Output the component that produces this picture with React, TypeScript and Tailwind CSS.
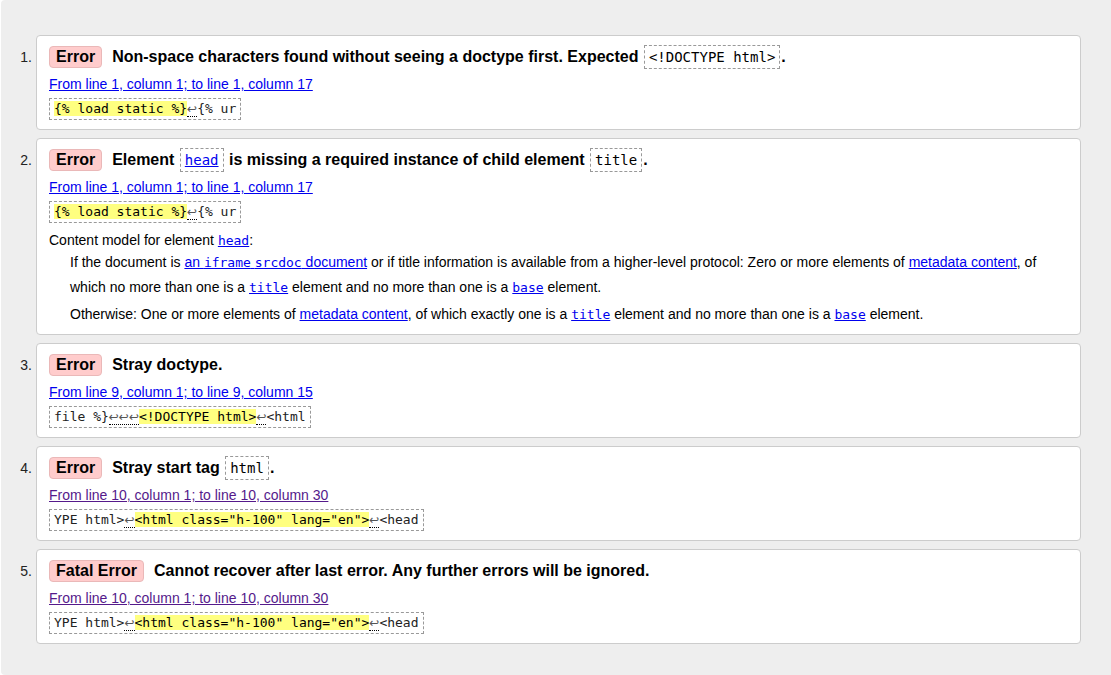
import React from 'react';

type Seg = { t: string; hl?: boolean; lf?: boolean };

const mono = "font-['DejaVu_Sans_Mono','Liberation_Mono',monospace]";

function Code({ children }: { children: React.ReactNode }) {
  return (
    <code className={`${mono} font-normal text-[14px] inline-block border border-dashed border-[#999] px-[4px] leading-[22px] mx-[1px]`}>
      {children}
    </code>
  );
}

function Link({ children, visited = false }: { children: React.ReactNode; visited?: boolean }) {
  return (
    <a href="#" className={`underline ${visited ? 'text-[#551a8b]' : 'text-[#0000ee]'}`}>
      {children}
    </a>
  );
}

function Mono({ children }: { children: React.ReactNode }) {
  return <code className={`${mono} text-[13px]`}>{children}</code>;
}

function Extract({ segs }: { segs: Seg[] }) {
  return (
    <div className={`${mono} inline-block border border-dashed border-[#999] px-[4px] h-[22px] leading-[20px] text-[13px] text-[#222] whitespace-pre`}>
      {segs.map((s, i) =>
        s.lf ? (
          <span key={i} className="font-['DejaVu_Sans',sans-serif] text-[12px] border-b border-dotted border-black text-[#555]">{s.t}</span>
        ) : s.hl ? (
          <span key={i} className="bg-[#ffff80] text-black">{s.t}</span>
        ) : (
          <span key={i}>{s.t}</span>
        )
      )}
    </div>
  );
}

const docExtract: Seg[] = [
  { t: 'YPE html>' },
  { t: '↩', lf: true },
  { t: '<html class="h-100" lang="en">', hl: true },
  { t: '↩', lf: true },
  { t: '<head' },
];

const loadExtract: Seg[] = [
  { t: '{% load static %}', hl: true },
  { t: '↩', lf: true },
  { t: '{% ur' },
];

type Item = {
  kind: string;
  title: React.ReactNode;
  loc: string;
  visited?: boolean;
  extract: Seg[];
  extra?: React.ReactNode;
};

const items: Item[] = [
  {
    kind: 'Error',
    title: <>Non-space characters found without seeing a doctype first. Expected <Code>&lt;!DOCTYPE html&gt;</Code>.</>,
    loc: 'From line 1, column 1; to line 1, column 17',
    extract: loadExtract,
  },
  {
    kind: 'Error',
    title: (
      <>
        Element <Code><Link>head</Link></Code> is missing a required instance of child element <Code>title</Code>.
      </>
    ),
    loc: 'From line 1, column 1; to line 1, column 17',
    extract: loadExtract,
    extra: (
      <div className="mt-[8px] mb-[-2px] leading-[18px]">
        <p>
          Content model for element <Link><Mono>head</Mono></Link>:
        </p>
        <div className="pl-[21px] leading-[25px]">
          <p>
            If the document is <Link>an <Mono>iframe</Mono> <Mono>srcdoc</Mono> document</Link> or if title information is
            available from a higher-level protocol: Zero or more elements of <Link>metadata content</Link>, of which no more
            than one is a <Link><Mono>title</Mono></Link> element and no more than one is a <Link><Mono>base</Mono></Link> element.
          </p>
          <p className="mt-[2px]">
            Otherwise: One or more elements of <Link>metadata content</Link>, of which exactly one is a{' '}
            <Link><Mono>title</Mono></Link> element and no more than one is a <Link><Mono>base</Mono></Link> element.
          </p>
        </div>
      </div>
    ),
  },
  {
    kind: 'Error',
    title: <>Stray doctype.</>,
    loc: 'From line 9, column 1; to line 9, column 15',
    extract: [
      { t: 'file %}' },
      { t: '↩↩↩', lf: true },
      { t: '<!DOCTYPE html>', hl: true },
      { t: '↩', lf: true },
      { t: '<html' },
    ],
  },
  {
    kind: 'Error',
    title: <>Stray start tag <Code>html</Code>.</>,
    loc: 'From line 10, column 1; to line 10, column 30',
    visited: true,
    extract: docExtract,
  },
  {
    kind: 'Fatal Error',
    title: <>Cannot recover after last error. Any further errors will be ignored.</>,
    loc: 'From line 10, column 1; to line 10, column 30',
    visited: true,
    extract: docExtract,
  },
];

export default function App() {
  return (
    <div className="min-h-screen bg-white font-['Liberation_Sans',Arial,sans-serif] text-[14px] text-black">
      <div className="min-h-screen ml-[1px] bg-[#eeeeee] rounded-l-[4px] pt-[35px] pb-[30px] pr-[30px]">
        <ol className="flex flex-col gap-[8px]">
          {items.map((it, i) => (
            <li key={i} className="flex">
              <span className="w-[35px] shrink-0 pr-[4px] text-right pt-[7px] leading-[30px] text-[#222]">{i + 1}.</span>
              <div className="flex-1 bg-white border border-[#ccc] rounded-[4px] px-[12px] pt-[6px] pb-[9px]">
                <div className="h-[30px] flex items-center">
                  <span className="bg-[#ffcccc] border border-[#eab8b8] rounded-[4px] px-[6px] h-[22px] leading-[20px] text-[16px] font-bold mr-[10px]">
                    {it.kind}
                  </span>
                  <span className="text-[16px] font-bold whitespace-nowrap">{it.title}</span>
                </div>
                <p className="mt-[3px] leading-[18px]">
                  <Link visited={it.visited}>{it.loc}</Link>
                </p>
                <div className="mt-[5px]">
                  <Extract segs={it.extract} />
                </div>
                {it.extra}
              </div>
            </li>
          ))}
        </ol>
      </div>
    </div>
  );
}
